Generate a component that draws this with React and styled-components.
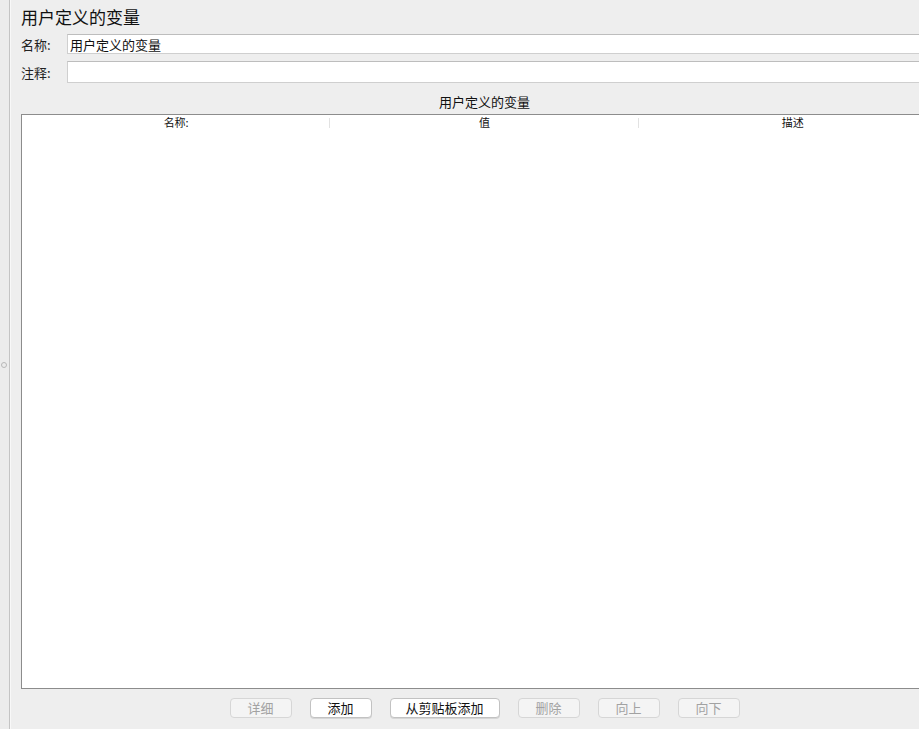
import React from 'react'
import styled, { createGlobalStyle } from 'styled-components'

const GlobalStyle = createGlobalStyle`
  html, body {
    margin: 0;
    padding: 0;
    overflow: hidden;
    background: #eeeeee;
  }
  body {
    font-family: "Noto Sans CJK SC", "Noto Sans", sans-serif;
    color: #1a1a1a;
  }
`

const columns = ['名称:', '值', '描述']

const buttons = [
    { label: '详细', width: 62, disabled: true },
    { label: '添加', width: 62 },
    { label: '从剪贴板添加', width: 110 },
    { label: '删除', width: 62, disabled: true },
    { label: '向上', width: 62, disabled: true },
    { label: '向下', width: 62, disabled: true },
]

export default function App() {
    return (
        <Frame>
            <GlobalStyle />
            <SideStrip>
                <Grip />
            </SideStrip>

            <Main>
                <Title>用户定义的变量</Title>

                <FieldRow>
                    <Label>名称:</Label>
                    <Input $height={20} defaultValue="用户定义的变量" />
                </FieldRow>
                <FieldRow $gap={7}>
                    <Label>注释:</Label>
                    <Input $height={22} defaultValue="" />
                </FieldRow>

                <TableTitle>用户定义的变量</TableTitle>

                <TableBox>
                    <HeaderRow>
                        {columns.map((col, i) => (
                            <HeaderCell key={col} $last={i === columns.length - 1}>
                                {col}
                            </HeaderCell>
                        ))}
                    </HeaderRow>
                </TableBox>

                <ButtonBar>
                    {buttons.map((b) => (
                        <Button key={b.label} $width={b.width} disabled={b.disabled}>
                            {b.label}
                        </Button>
                    ))}
                </ButtonBar>
            </Main>
        </Frame>
    )
}

const Frame = styled.div`
    display: flex;
    height: 729px;
    width: 960px;
    background-color: #eeeeee;
`

const SideStrip = styled.div`
    position: relative;
    width: 9px;
    flex-shrink: 0;
    border-right: 1px solid #c4c4c4;
    box-shadow: 1px 0 0 #f8f8f8;
    background-color: #ececec;
`

const Grip = styled.span`
    position: absolute;
    top: 362px;
    left: 1px;
    width: 4px;
    height: 4px;
    border: 1px solid #b8b8b8;
    border-radius: 50%;
`

const Main = styled.div`
    display: flex;
    flex-direction: column;
    width: 927px;
    padding: 5px 0 0 11px;
`

const Title = styled.div`
    font-size: 17px;
    line-height: 24px;
    height: 24px;
    color: #111;
`

const FieldRow = styled.div`
    display: flex;
    align-items: center;
    margin-top: ${({ $gap }) => $gap || 5}px;
`

const Label = styled.span`
    width: 46px;
    flex-shrink: 0;
    font-size: 13px;
    color: #222;
`

const Input = styled.input`
    flex: 1;
    height: ${({ $height }) => $height}px;
    box-sizing: border-box;
    margin: 0;
    padding: 0 2px;
    border: 1px solid #cfcfcf;
    border-top-color: #bdbdbd;
    background-color: #ffffff;
    font-family: inherit;
    font-size: 13px;
    color: #111;
    outline: none;
`

const TableTitle = styled.div`
    margin-top: 10px;
    height: 18px;
    line-height: 18px;
    text-align: center;
    font-size: 13px;
    color: #111;
`

const TableBox = styled.div`
    margin-top: 3px;
    height: 575px;
    box-sizing: border-box;
    border: 1px solid #8c8c8c;
    background-color: #ffffff;
`

const HeaderRow = styled.div`
    display: grid;
    grid-template-columns: repeat(3, 1fr);
    height: 16px;
`

const HeaderCell = styled.div`
    position: relative;
    text-align: center;
    font-size: 11px;
    line-height: 14px;
    color: #111;
    &::after {
        content: '';
        display: ${({ $last }) => ($last ? 'none' : 'block')};
        position: absolute;
        right: 0;
        top: 3px;
        height: 10px;
        width: 1px;
        background-color: #e2e2e2;
    }
`

const ButtonBar = styled.div`
    display: flex;
    justify-content: center;
    gap: 18px;
    margin-top: 9px;
`

const Button = styled.button`
    width: ${({ $width }) => $width}px;
    height: 20px;
    box-sizing: border-box;
    padding: 0;
    border: 1px solid #c2c2c2;
    border-radius: 4px;
    background-color: #ffffff;
    box-shadow: 0 1px 0 #d6d6d6;
    font-family: inherit;
    font-size: 13px;
    line-height: 18px;
    color: #111;
    &:disabled {
        background-color: #f4f4f4;
        border-color: #d6d6d6;
        box-shadow: none;
        color: #a2a2a2;
    }
`
